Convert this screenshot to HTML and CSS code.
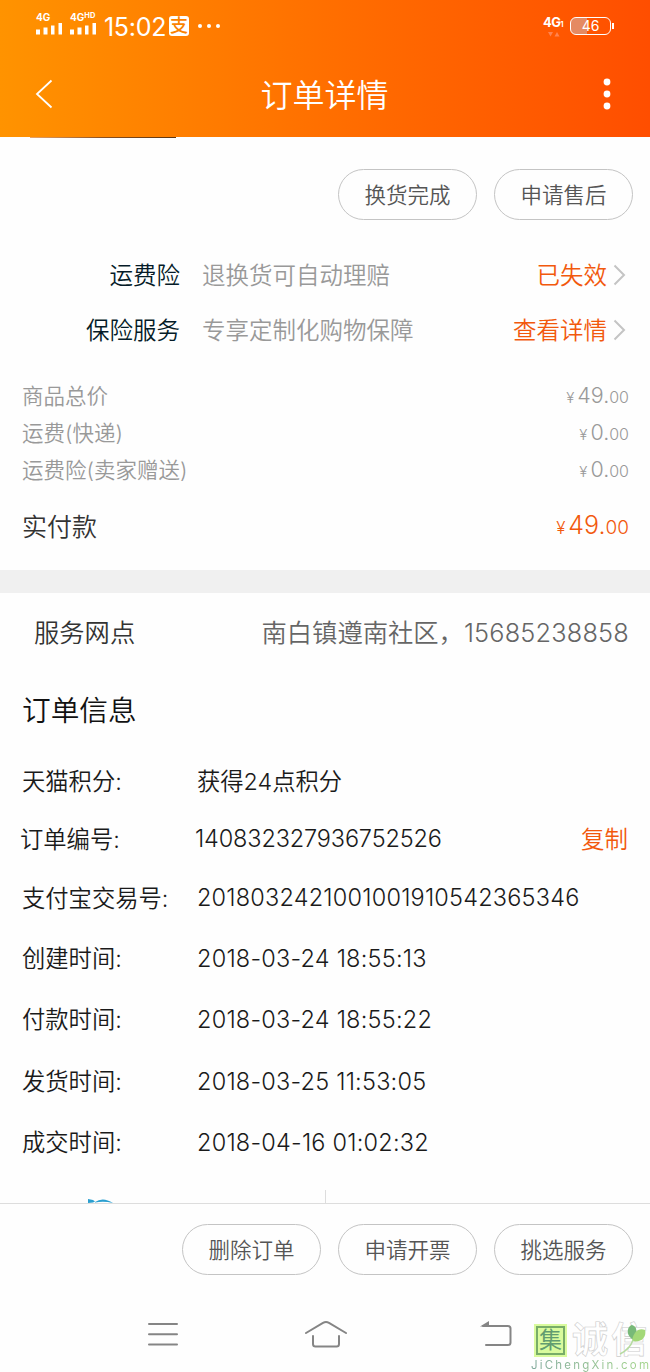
FILE: index.html
```html
<!DOCTYPE html>
<html lang="zh-CN">

<head>
    <meta charset="UTF-8">
    <meta name="viewport" content="width=device-width, initial-scale=1.0">
    <title>订单详情</title>

    <link rel="stylesheet" href="styles.css">
</head>

<body>
    <div id="app">
        <header class="header">
            <div class="status">
                <div class="signal">
                    <span>4G</span>
                    <svg width="26" height="12" viewBox="0 0 26 12" fill="#fff">
                        <path d="M0 6.500h4v5H0zM7.500 4.500h4v7h-4zM15 2.500h3.500v9H15zM22.500 0H26v11.500h-3.500z" />
                    </svg>
                </div>
                <div class="signal segundo">
                    <span>4G<sup>HD</sup></span>
                    <svg width="26" height="12" viewBox="0 0 26 12" fill="#fff">
                        <path d="M0 6.500h4v5H0zM7.500 4.500h4v7h-4zM15 2.500h3.500v9H15zM22.500 0H26v11.500h-3.500z" />
                    </svg>
                </div>
                <span class="clock">15:02</span>
                <span class="alipay">支</span>
                <span class="more"><i></i><i></i><i></i></span>
                <div class="net">
                    <span>4G<small>1</small></span>
                    <svg width="12" height="5" viewBox="0 0 12 5" fill="#ff8450">
                        <path d="M0 0h5L2.500 4.500zM6.500 4.500h5L9 0z" />
                    </svg>
                </div>
                <div class="battery"><span>46</span></div>
            </div>
            <div class="titlebar">
                <svg class="back" width="18" height="30" viewBox="0 0 18 30" fill="none" stroke="#fff" stroke-width="1.800">
                    <path d="M16.500 1.500L2 15l14.500 13.500" />
                </svg>
                <h1>订单详情</h1>
                <svg class="menu" width="8" height="32" viewBox="0 0 8 32" fill="#fff">
                    <circle cx="4" cy="4" r="3.400" />
                    <circle cx="4" cy="16" r="3.400" />
                    <circle cx="4" cy="28" r="3.400" />
                </svg>
            </div>
        </header>

        <main>
            <div class="thumb"></div>
            <div class="actions">
                <button>换货完成</button>
                <button>申请售后</button>
            </div>

            <div class="insurance">
                <span class="name">运费险</span>
                <span class="desc">退换货可自动理赔</span>
                <a>已失效</a>
                <svg width="13" height="22" viewBox="0 0 13 22" fill="none" stroke="#c4c4c4" stroke-width="2">
                    <path d="M1.500 1.500L11 11l-9.500 9.500" />
                </svg>
            </div>
            <div class="insurance">
                <span class="name">保险服务</span>
                <span class="desc">专享定制化购物保障</span>
                <a>查看详情</a>
                <svg width="13" height="22" viewBox="0 0 13 22" fill="none" stroke="#c4c4c4" stroke-width="2">
                    <path d="M1.500 1.500L11 11l-9.500 9.500" />
                </svg>
            </div>

            <div class="prices">
                <div class="price"><span>商品总价</span><span class="valor"><small class="yen">¥</small>49.<small>00</small></span></div>
                <div class="price"><span>运费(快递)</span><span class="valor"><small class="yen">¥</small>0.<small>00</small></span></div>
                <div class="price"><span>运费险(卖家赠送)</span><span class="valor"><small class="yen">¥</small>0.<small>00</small></span></div>
                <div class="price total"><span>实付款</span><span class="valor"><small class="yen">¥</small>49.<small>00</small></span></div>
            </div>

            <div class="divider"></div>

            <div class="station">
                <span>服务网点</span>
                <span class="address">南白镇遵南社区，<b>15685238858</b></span>
            </div>

            <h2>订单信息</h2>

            <div class="info points"><span>天猫积分:</span><span>获得24点积分</span></div>
            <div class="info number"><span>订单编号:</span><span>140832327936752526</span><a>复制</a></div>
            <div class="info trade"><span>支付宝交易号:</span><span>2018032421001001910542365346</span></div>
            <div class="info time"><span>创建时间:</span><span>2018-03-24 18:55:13</span></div>
            <div class="info time"><span>付款时间:</span><span>2018-03-24 18:55:22</span></div>
            <div class="info time"><span>发货时间:</span><span>2018-03-25 11:53:05</span></div>
            <div class="info time"><span>成交时间:</span><span>2018-04-16 01:02:32</span></div>

            <div class="contact">
                <div>
                    <svg width="27" height="5" viewBox="0 0 27 5" fill="#2a9fd0">
                        <path d="M1 0l5 1L8 2.500l-2 1L1 4zM8 3Q16-2.500 26 4q-9-2-18-.5z" />
                    </svg>
                </div>
            </div>
        </main>

        <footer class="actions bottom">
            <button>删除订单</button>
            <button>申请开票</button>
            <button>挑选服务</button>
        </footer>

        <nav>
            <svg width="30" height="26" viewBox="0 0 30 26" fill="none" stroke="#858585" stroke-width="2" stroke-linecap="round">
                <path d="M1 3h28M1 13.300h28M1 23.600h28" />
            </svg>
            <svg class="home" width="42" height="28" viewBox="0 0 42 28" fill="none" stroke="#858585" stroke-width="2" stroke-linecap="round" stroke-linejoin="round">
                <path d="M1 13L18 2.800q3-1.600 6 0L41 13M8 16v8q0 2.500 2.500 2.500h21q2.500 0 2.500-2.500v-8" />
            </svg>
            <svg width="32" height="26" viewBox="0 0 32 26" fill="none" stroke="#858585" stroke-width="2" stroke-linecap="round">
                <path d="M3 5h25q2.500 0 2.500 2.500v14q0 2.500-2.500 2.500H6" />
                <path d="M0 5.500L9 0v5.500z" fill="#858585" stroke="none" />
            </svg>
        </nav>

        <div class="watermark">
            <div class="logo">
                <span class="seal">集</span>
                <span class="outline">诚信</span>
                <svg width="30" height="32" viewBox="0 0 30 32">
                    <path d="M16 16C7 12 9 2 14 1c5 1 6 8 2 15z" fill="#78b978" />
                    <path d="M14 17C15 8 21 3 27 6c2 7-4 13-13 11z" fill="#a3d878" />
                    <path d="M15 16Q12 25 2 30" fill="none" stroke="#b5dba0" stroke-width="1.500" />
                </svg>
            </div>
            <div class="site">JiChengXin.com</div>
        </div>
    </div>
</body>

</html>
```
FILE: styles.css
```css
* {
    padding: 0;
    margin: 0;
    box-sizing: border-box;
}

body {
    font-family: Inter, 'Noto Sans CJK SC', sans-serif;
    font-weight: 350;
    background-color: #fefefe;
    color: #222;
}

#app {
    position: relative;
    width: 650px;
    height: 1372px;
    overflow: hidden;
    white-space: nowrap;
}

.header {
    height: 137px;
    background: linear-gradient(to right, #ff9300, #ff6f00 50%, #ff4e00);
    color: #fff;
}

.status {
    height: 51px;
    padding: 0 36px;
    display: flex;
    align-items: center;
}

.signal {
    width: 26px;
    height: 22px;
    display: flex;
    flex-direction: column;
    justify-content: space-between;
    font-size: 10px;
    font-weight: 700;
    line-height: 9px;
    margin-top: -4px;
}

.signal sup {
    font-size: 7.5px;
    line-height: 0;
    vertical-align: 3px;
}

.signal.segundo {
    margin-left: 8px;
}

.clock {
    width: 65px;
    margin-left: 8px;
    padding-top: 2px;
    font-size: 25px;
    font-weight: 400;
    letter-spacing: -0.3px;
}

.alipay {
    width: 20px;
    height: 20px;
    border-radius: 3px;
    background-color: #fff;
    color: #fa8200;
    font-size: 18px;
    font-weight: 500;
    line-height: 20px;
    text-align: center;
}

.more {
    display: flex;
    gap: 5px;
    margin-left: 9px;
}

.more i {
    width: 4px;
    height: 4px;
    border-radius: 50%;
    background-color: #fff;
}

.net {
    width: 22px;
    margin-left: auto;
    font-size: 13px;
    font-weight: 700;
    line-height: 14px;
    letter-spacing: -0.5px;
    display: flex;
    flex-direction: column;
}

.net small {
    font-size: 7px;
}

.net svg {
    margin-left: 5px;
}

.battery {
    position: relative;
    width: 41px;
    height: 18px;
    margin: 0 3px 0 5px;
    border: 1.5px solid #fff;
    border-radius: 6px;
    background: linear-gradient(to right, #e58a62 42%, transparent 42%);
    font-size: 14px;
    font-weight: 400;
    line-height: 16px;
    text-align: center;
}

.battery::after {
    content: '';
    position: absolute;
    right: -4px;
    top: 5px;
    width: 2px;
    height: 6px;
    background-color: #fff;
}

.titlebar {
    height: 86px;
    padding: 0 39px 0 35px;
    display: flex;
    align-items: center;
    justify-content: space-between;
}

h1 {
    padding: 0 7px 3px 0;
    font-size: 32px;
    font-weight: 350;
}

main {
    height: 1066px;
}

.thumb {
    width: 146px;
    height: 1px;
    margin-left: 30px;
    background: linear-gradient(to right, #e8a46a, #8a5020 50%, #5c3510);
}

.actions {
    height: 109px;
    padding: 31px 17px 0 0;
    display: flex;
    justify-content: flex-end;
    gap: 17px;
}

button {
    width: 139px;
    height: 51px;
    padding-bottom: 2px;
    border: 1px solid #c4c4c4;
    border-radius: 26px;
    background-color: #fefefe;
    color: #555;
    font-family: inherit;
    font-size: 21.5px;
    font-weight: 350;
}

.insurance {
    height: 55px;
    padding-right: 24px;
    display: flex;
    align-items: center;
    font-size: 23.5px;
    color: #999;
}

.insurance span,
.insurance a {
    padding-bottom: 2px;
}

.insurance .name {
    width: 180px;
    text-align: right;
    color: #051b28;
}

.insurance .desc {
    margin-left: 22px;
}

.insurance a {
    margin-left: auto;
    margin-right: 6px;
}

a {
    color: #f2590d;
}

.prices {
    height: 213px;
    padding: 19px 21px 0 22px;
}

.price {
    height: 37px;
    display: flex;
    align-items: center;
    justify-content: space-between;
    font-size: 21.5px;
    color: #999;
}

.price small {
    font-size: 16px;
}

.price .yen {
    font-size: 15px;
    margin-right: 3px;
}

.total {
    height: 76px;
    font-size: 25px;
    color: #333;
}

.total .valor {
    color: #f2590d;
}

.total small {
    font-size: 19px;
}

.total .yen {
    font-size: 17px;
}

.divider {
    height: 23px;
    background-color: #f0f0f0;
}

.station {
    height: 78px;
    padding: 0 21px 3px 34px;
    display: flex;
    align-items: center;
    justify-content: space-between;
    font-size: 25.3px;
    color: #333;
}

.address {
    color: #666;
}

.address b {
    font-weight: 350;
    letter-spacing: 0.2px;
}

h2 {
    height: 80px;
    padding-left: 22px;
    font-size: 28.7px;
    font-weight: 350;
    line-height: 80px;
    color: #111;
}

.info {
    height: 61.3px;
    padding: 0 22px;
    display: flex;
    align-items: center;
    font-size: 23.5px;
    color: #1a1a1a;
}

.info span:first-child {
    width: 175px;
    padding-bottom: 1px;
    font-size: 23.3px;
}

.info a {
    margin-left: auto;
    padding-bottom: 2px;
}

.points,
.number,
.trade {
    height: 58.6px;
}

.points span:last-child {
    font-size: 23.3px;
}

.number {
    padding-left: 20px;
}

.number span:last-of-type {
    letter-spacing: -0.15px;
}

.trade span:last-child {
    letter-spacing: 0.2px;
}

.time span:last-child {
    padding-top: 2px;
    letter-spacing: 0.22px;
}

.contact {
    height: 31px;
    display: flex;
    align-items: flex-end;
}

.contact div {
    width: 326px;
    height: 13px;
    padding: 8px 0 0 87px;
    border-right: 1px solid #ddd;
    line-height: 0;
}

.actions.bottom {
    height: 93px;
    padding-top: 20px;
    border-top: 1px solid #ddd;
}

nav {
    height: 76px;
    padding: 0 138px 0 148px;
    display: flex;
    align-items: center;
    justify-content: space-between;
}

nav .home {
    margin-right: 6px;
}

.watermark {
    position: absolute;
    left: 531px;
    top: 1323px;
    width: 119px;
}

.logo {
    position: relative;
    height: 34px;
    display: flex;
    align-items: center;
}

.seal {
    width: 29px;
    height: 29px;
    margin-left: 5px;
    border: 2px solid #78ad68;
    outline: 2px solid #d9fb9d;
    background-color: #d9fb9d;
    color: #629c70;
    font-size: 23px;
    font-weight: 400;
    line-height: 25px;
    text-align: center;
}

.outline {
    margin-left: 7px;
    font-size: 36px;
    font-weight: 700;
    line-height: 32px;
    letter-spacing: 3px;
    color: #fff;
    -webkit-text-stroke: 0.6px #ccc;
}

.logo svg {
    position: absolute;
    right: 2px;
    top: 1px;
}

.site {
    margin-top: 2px;
    font-size: 11.5px;
    font-weight: 400;
    line-height: 13px;
    letter-spacing: 2.2px;
    background: linear-gradient(to right, #7fa89a, #a5d68c);
    -webkit-background-clip: text;
    color: transparent;
}
```
